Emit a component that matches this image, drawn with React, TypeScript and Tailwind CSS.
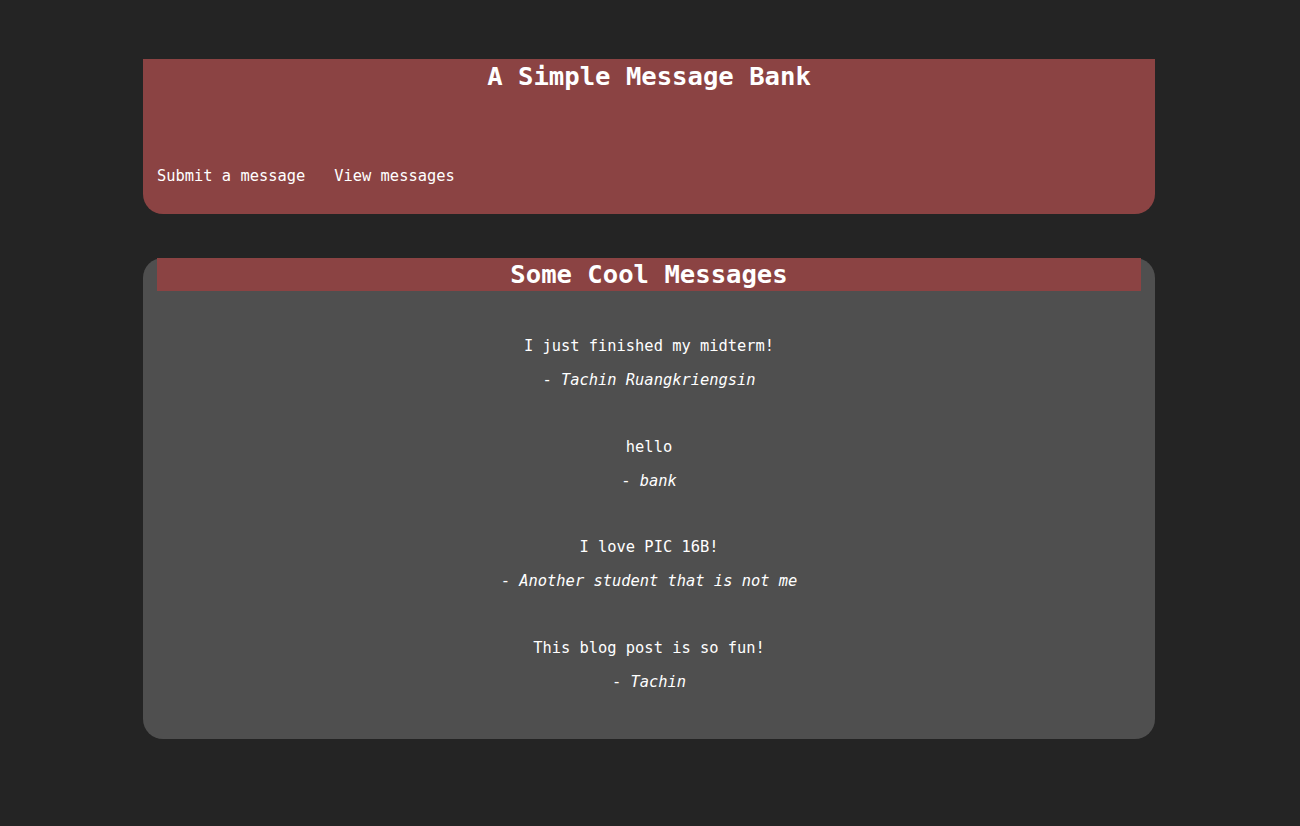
import React from 'react';

const messages = [
  { text: 'I just finished my midterm!', author: 'Tachin Ruangkriengsin' },
  { text: 'hello', author: 'bank' },
  { text: 'I love PIC 16B!', author: 'Another student that is not me' },
  { text: 'This blog post is so fun!', author: 'Tachin' },
];

const App: React.FC = () => {
  return (
    <div
      className="min-h-[826px] w-full bg-[#242424] pt-[59px] text-white"
      style={{ fontFamily: '"DejaVu Sans Mono", "Liberation Mono", monospace' }}
    >
      <div className="ml-[143px] w-[1012px]">
        {/* Header */}
        <header className="h-[155px] rounded-b-[20px] bg-[#8b4343] px-[14px] pt-[2px]">
          <h1 className="text-center text-[25.6px] font-bold leading-[30px]">A Simple Message Bank</h1>
          <nav className="mt-[76px] flex gap-[29px] text-[15.4px] leading-[18px]">
            <a href="#">Submit a message</a>
            <a href="#">View messages</a>
          </nav>
        </header>

        {/* Messages */}
        <main className="mt-[44px] rounded-[20px] bg-[#4f4f4f] px-[14px] pb-[47px]">
          <h2 className="bg-[#8b4343] text-center text-[25.6px] font-bold leading-[33px]">Some Cool Messages</h2>
          <div className="mt-[45px] flex flex-col items-center gap-[46.6px] text-[15.4px] leading-[20px]">
            {messages.map((m) => (
              <div key={m.text} className="flex flex-col items-center gap-[14px]">
                <p>{m.text}</p>
                <p>
                  - <i>{m.author}</i>
                </p>
              </div>
            ))}
          </div>
        </main>
      </div>
    </div>
  );
};

export default App;
